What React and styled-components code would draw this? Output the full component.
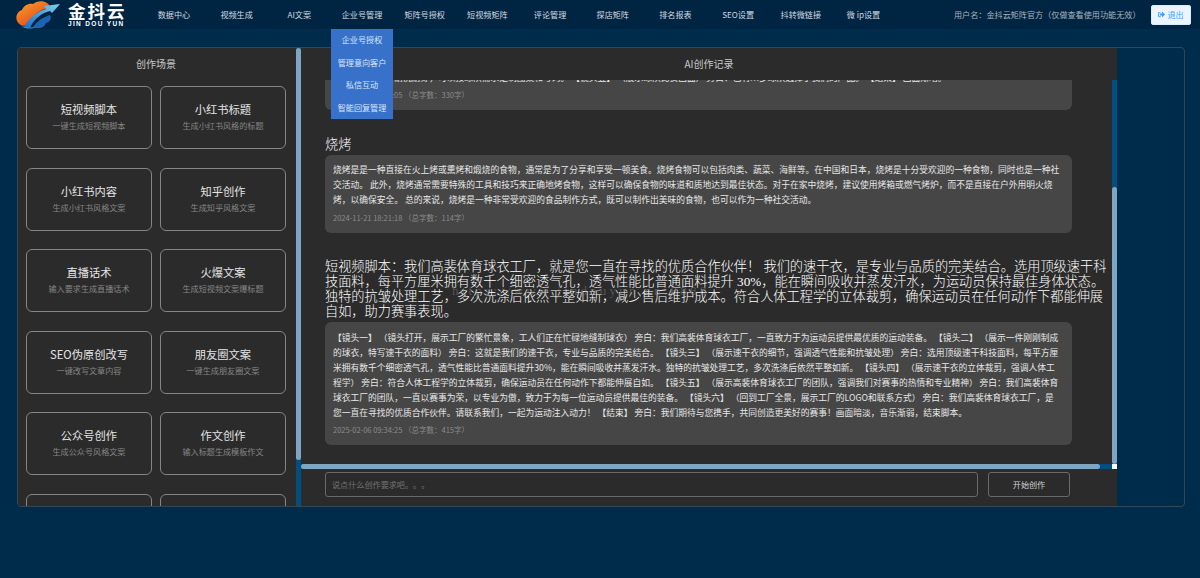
import React from 'react';
import styled, { createGlobalStyle } from 'styled-components';
import { FaSignOutAlt } from 'react-icons/fa';

const GlobalStyle = createGlobalStyle`
  html, body {
    margin: 0;
    height: 100%;
    overflow: hidden;
    background: #002c4c;
    font-family: "Noto Sans CJK SC", "Liberation Sans", sans-serif;
    text-spacing-trim: space-all;
  }
  * {
    box-sizing: border-box;
  }
`

const Header = styled.header`
  height: 29px;
  display: flex;
  align-items: center;
  background: #002543;
`

const LogoWrap = styled.div`
  width: 142.6px;
  padding-left: 16px;
  display: flex;
  align-items: center;
  gap: 8px;
  flex-shrink: 0;
`

const LogoText = styled.div`
  display: flex;
  flex-direction: column;
  color: #fff;
`

const LogoName = styled.span`
  font-size: 17.5px;
  line-height: 18px;
  font-weight: 700;
  letter-spacing: 2px;
  white-space: nowrap;
`

const LogoPinyin = styled.span`
  font-family: "Liberation Sans", sans-serif;
  font-size: 6.5px;
  line-height: 8px;
  font-weight: 700;
  letter-spacing: 1.35px;
  white-space: nowrap;
`

const Nav = styled.nav`
  display: flex;
  flex: 1;
`

const NavItem = styled.div`
  position: relative;
  width: 62.7px;
  text-align: center;
  font-size: 8.125px;
  line-height: 29px;
  color: #d3dae0;
  white-space: nowrap;
`

const Dropdown = styled.div`
  position: absolute;
  top: 29px;
  left: 0;
  width: 62.7px;
  height: 90px;
  display: flex;
  flex-direction: column;
  background: #3771c9;
  z-index: 5;
`

const DropItem = styled.div`
  height: 22.5px;
  line-height: 21px;
  color: #d9e6fb;
  font-size: 8.125px;
`

const UserName = styled.div`
  font-size: 8.125px;
  color: #a9b3bc;
  margin-right: 10.5px;
  white-space: nowrap;
`

const LogoutButton = styled.button`
  width: 40px;
  height: 20px;
  margin-right: 9px;
  padding: 0;
  display: flex;
  align-items: center;
  justify-content: center;
  gap: 2px;
  background: #ecf5ff;
  border: 1px solid #d9ecff;
  border-radius: 2px;
  color: #409eff;
  font-family: inherit;
  font-size: 8.125px;
`

const Panel = styled.main`
  position: relative;
  width: 1168px;
  height: 460px;
  margin: 18px 0 0 17px;
  display: flex;
  border: 1px solid #33475a;
  border-radius: 4px;
  overflow: hidden;
`

const Scenes = styled.aside`
  position: relative;
  width: 283px;
  flex-shrink: 0;
  height: 100%;
  padding: 0 15px 0 8px;
  background: #2b2b2b;
  overflow: hidden;
`

const VBar = styled.div`
  position: absolute;
  top: ${(p) => p.$top}px;
  right: 0;
  bottom: ${(p) => p.$bottom}px;
  width: 5px;
  background: #004f80;
`

const VThumb = styled.div`
  margin-top: ${(p) => p.$offset}px;
  height: ${(p) => p.$size}px;
  background: #7ea5c1;
  border-radius: 3px;
`

const HBar = styled.div`
  position: absolute;
  left: 0;
  right: 5px;
  bottom: 37px;
  height: 5px;
  background: #004f80;
`

const HThumb = styled.div`
  width: ${(p) => p.$size}px;
  height: 100%;
  background: #7ea5c1;
  border-radius: 3px;
`

const ScrollCorner = styled.div`
  position: absolute;
  right: 0;
  bottom: 37px;
  width: 5px;
  height: 5px;
  background: #fff;
`

const ColumnTitle = styled.h3`
  margin: 0;
  font-size: 10px;
  line-height: 32px;
  font-weight: 400;
  text-align: center;
  color: #c9c9c9;
`

const SceneTitle = styled(ColumnTitle)`
  height: 38px;
`

const SceneGrid = styled.div`
  display: grid;
  grid-template-columns: 1fr 1fr;
  grid-auto-rows: 63px;
  column-gap: 8px;
  row-gap: 18.5px;
`

const SceneCard = styled.div`
  padding-top: 14px;
  border: 1px solid #858585;
  border-radius: 6px;
  text-align: center;
`

const SceneName = styled.div`
  font-size: 11.25px;
  line-height: 16px;
  color: #e4e4e4;
`

const SceneDesc = styled.div`
  margin-top: 2px;
  font-size: 8.125px;
  line-height: 14px;
  color: #858585;
`

const Records = styled.section`
  position: relative;
  width: 816px;
  flex-shrink: 0;
  height: 100%;
  display: flex;
  flex-direction: column;
  background: #2b2b2b;
`

// shows the newest records, the older ones run off the top
const RecordScroll = styled.div`
  width: 100%;
  height: 389px;
  display: flex;
  flex-direction: column;
  justify-content: flex-end;
  overflow: hidden;
`

const RecordList = styled.div`
  flex-shrink: 0;
  padding: 0 0 24px 24px;
`

const Record = styled.article`
  margin-bottom: 26.5px;

  &:last-child {
    margin-bottom: 0;
  }
`

const Prompt = styled.h3`
  width: 785px;
  margin: 0 0 3px;
  font-family: "Liberation Serif", "Noto Sans CJK SC", serif;
  font-size: 13.2px;
  line-height: 15px;
  font-weight: 300;
  color: #fff;
`

const Bubble = styled.div`
  width: 747px;
  padding: 7.5px 11px 9px 8px;
  background: #464646;
  border-radius: 6px;
`

const BubbleText = styled.div`
  font-size: 8.75px;
  line-height: 15px;
  color: #e6e6e6;
`

const BubbleMeta = styled.div`
  margin-top: 4.5px;
  font-size: 7.5px;
  line-height: 12px;
  color: #8b8b8b;
`

const Composer = styled.form`
  display: flex;
  gap: 10px;
  padding: 3px 0 0 24px;
`

const PromptInput = styled.input`
  width: 653px;
  height: 25px;
  padding: 0 6px;
  background: transparent;
  border: 1px solid #6a6a6a;
  border-radius: 3px;
  font-family: inherit;
  font-size: 8.125px;
  color: #ddd;

  &::placeholder {
    color: #727272;
  }
`

const StartButton = styled.button`
  width: 82px;
  height: 25px;
  padding: 0;
  background: transparent;
  border: 1px solid #6a6a6a;
  border-radius: 3px;
  font-family: inherit;
  font-size: 8.125px;
  color: #d0d0d0;
`

const Watermark = styled.div`
  position: absolute;
  left: 434px;
  top: 235px;
  font-family: "Liberation Serif", serif;
  font-size: 13px;
  line-height: 15px;
  letter-spacing: 3.2px;
  color: rgba(130, 130, 130, 0.5);
  white-space: nowrap;
  pointer-events: none;
`

const Logo = () => (
  <svg width="44" height="28" viewBox="0 0 44 28">
    <defs>
      <linearGradient id="cloudFill" x1="0" y1="0" x2="0.8" y2="1">
        <stop offset="0" stopColor="#f9a825" />
        <stop offset="1" stopColor="#e53a1e" />
      </linearGradient>
      <linearGradient id="waveFill" x1="0" y1="1" x2="1" y2="0">
        <stop offset="0" stopColor="#1a6fc4" />
        <stop offset="1" stopColor="#7fd0ef" />
      </linearGradient>
    </defs>
    <path
      d="M1 20C-1 15 2 10 6 9 8 4 13 2 17 3 20 0 27-1 31 2 34 4 34 6 33 7 25 8 17 13 12 24 7 26 3 24 1 20z"
      fill="url(#cloudFill)"
    />
    <path d="M8 26C13 17 20 11 30 8l-2-3 16-2-8 9-2-2C25 12 18 18 14 27z" fill="url(#waveFill)" />
    <path d="M17 27c2-5 8-10 17-13 2 3 0 7-4 8-1 3-4 5-7 5z" fill="#1c63b5" />
    <path d="M5 25c4 3 9 3 13 2l1-1c-5 1-10 0-14-1z" fill="#2c8fdc" />
  </svg>
)

const navItems = ['数据中心', '视频生成', 'AI文案', '企业号管理', '矩阵号授权', '短视频矩阵', '评论管理', '探店矩阵', '排名报表', 'SEO设置', '抖转微链接', '微 ip设置']

const menuItems = ['企业号授权', '管理意向客户', '私信互动', '智能回复管理']

const scenes = [
  ['短视频脚本', '一键生成短视频脚本'],
  ['小红书标题', '生成小红书风格的标题'],
  ['小红书内容', '生成小红书风格文案'],
  ['知乎创作', '生成知乎风格文案'],
  ['直播话术', '输入要求生成直播话术'],
  ['火爆文案', '生成短视频文案爆标题'],
  ['SEO伪原创改写', '一键改写文章内容'],
  ['朋友圈文案', '一键生成朋友圈文案'],
  ['公众号创作', '生成公众号风格文案'],
  ['作文创作', '输入标题生成模板作文'],
  ['', ''],
  ['', ''],
]

const records = [
  {
    prompt: '短视频脚本：我们高裴体育球衣工厂，专业定制速干球衣，为运动员提供优质的运动装备。',
    text: '【镜头一】 （展示工厂外景） 旁白：我们高裴体育球衣工厂，专注运动装备多年。 【镜头二】 （展示车间生产画面，工人们正在裁剪面料） 旁白：每一件球衣都经过严格的工艺流程，从选料、裁剪到缝制，每一步都精益求精。 【镜头三】 （展示面料细节） 旁白：速干面料轻薄透气，吸湿排汗，让运动员在赛场上始终保持舒适。 【镜头四】 （展示成品球衣） 旁白：版型合身，印制清晰，耐洗耐穿，可以按球队需求定制图案和号码。 【镜头五】 （展示球队比赛画面） 旁白：已有众多球队选择了我们的产品。 【结束】 画面渐暗。',
    meta: '2024-11-21 18:20:05 （总字数：330字）',
  },
  {
    prompt: '烧烤',
    text: '烧烤是是一种直接在火上烤或熏烤和煅烧的食物，通常是为了分享和享受一顿美食。烧烤食物可以包括肉类、蔬菜、海鲜等。在中国和日本，烧烤是十分受欢迎的一种食物，同时也是一种社交活动。 此外，烧烤通常需要特殊的工具和技巧来正确地烤食物，这样可以确保食物的味道和质地达到最佳状态。对于在家中烧烤，建议使用烤箱或燃气烤炉，而不是直接在户外用明火烧烤，以确保安全。 总的来说，烧烤是一种非常受欢迎的食品制作方式，既可以制作出美味的食物，也可以作为一种社交活动。',
    meta: '2024-11-21 18:21:18 （总字数：114字）',
  },
  {
    prompt: '短视频脚本：我们高裴体育球衣工厂，就是您一直在寻找的优质合作伙伴！ 我们的速干衣，是专业与品质的完美结合。选用顶级速干科技面料，每平方厘米拥有数千个细密透气孔，透气性能比普通面料提升 30%，能在瞬间吸收并蒸发汗水，为运动员保持最佳身体状态。独特的抗皱处理工艺，多次洗涤后依然平整如新，减少售后维护成本。符合人体工程学的立体裁剪，确保运动员在任何动作下都能伸展自如，助力赛事表现。',
    text: '【镜头一】 （镜头打开，展示工厂的繁忙景象，工人们正在忙碌地缝制球衣） 旁白：我们高裴体育球衣工厂，一直致力于为运动员提供最优质的运动装备。 【镜头二】 （展示一件刚刚制成的球衣，特写速干衣的面料） 旁白：这就是我们的速干衣，专业与品质的完美结合。 【镜头三】 （展示速干衣的细节，强调透气性能和抗皱处理） 旁白：选用顶级速干科技面料，每平方厘米拥有数千个细密透气孔，透气性能比普通面料提升30%，能在瞬间吸收并蒸发汗水。独特的抗皱处理工艺，多次洗涤后依然平整如新。 【镜头四】 （展示速干衣的立体裁剪，强调人体工程学） 旁白：符合人体工程学的立体裁剪，确保运动员在任何动作下都能伸展自如。 【镜头五】 （展示高裴体育球衣工厂的团队，强调我们对赛事的热情和专业精神） 旁白：我们高裴体育球衣工厂的团队，一直以赛事为荣，以专业为傲，致力于为每一位运动员提供最佳的装备。 【镜头六】 （回到工厂全景，展示工厂的LOGO和联系方式） 旁白：我们高裴体育球衣工厂，是您一直在寻找的优质合作伙伴。请联系我们，一起为运动注入动力！ 【结束】 旁白：我们期待与您携手，共同创造更美好的赛事！画面暗淡，音乐渐弱，结束脚本。',
    meta: '2025-02-06 09:34:25 （总字数：415字）',
  },
]

const App = () => {
  return (
    <>
      <GlobalStyle />
      <Header>
        <LogoWrap>
          <Logo />
          <LogoText>
            <LogoName>金抖云</LogoName>
            <LogoPinyin>JIN DOU YUN</LogoPinyin>
          </LogoText>
        </LogoWrap>
        <Nav>
          {navItems.map((item) => (
            <NavItem key={item}>
              {item}
              {item === '企业号管理' && (
                <Dropdown>
                  {menuItems.map((menu) => (
                    <DropItem key={menu}>{menu}</DropItem>
                  ))}
                </Dropdown>
              )}
            </NavItem>
          ))}
        </Nav>
        <UserName>用户名：金抖云矩阵官方（仅做查看使用功能无效）</UserName>
        <LogoutButton type="button">
          <FaSignOutAlt size={7} />
          退出
        </LogoutButton>
      </Header>
      <Panel>
        <Scenes>
          <SceneTitle>创作场景</SceneTitle>
          <SceneGrid>
            {scenes.map(([name, desc], i) => (
              <SceneCard key={i}>
                <SceneName>{name}</SceneName>
                <SceneDesc>{desc}</SceneDesc>
              </SceneCard>
            ))}
          </SceneGrid>
          <VBar $top={0} $bottom={0}>
            <VThumb $offset={0} $size={412} />
          </VBar>
        </Scenes>
        <Records>
          <ColumnTitle>AI创作记录</ColumnTitle>
          <RecordScroll>
            <RecordList>
              {records.map((record) => (
                <Record key={record.meta}>
                  <Prompt>{record.prompt}</Prompt>
                  <Bubble>
                    <BubbleText>{record.text}</BubbleText>
                    <BubbleMeta>{record.meta}</BubbleMeta>
                  </Bubble>
                </Record>
              ))}
            </RecordList>
          </RecordScroll>
          <Composer onSubmit={(e) => e.preventDefault()}>
            <PromptInput placeholder="说点什么创作要求吧。。。" />
            <StartButton type="submit">开始创作</StartButton>
          </Composer>
          <VBar $top={32} $bottom={42}>
            <VThumb $offset={107} $size={277} />
          </VBar>
          <HBar>
            <HThumb $size={799} />
          </HBar>
          <ScrollCorner />
        </Records>
        <Watermark>https://www.jindouyun.cn:8888</Watermark>
      </Panel>
    </>
  );
};

export default App;
